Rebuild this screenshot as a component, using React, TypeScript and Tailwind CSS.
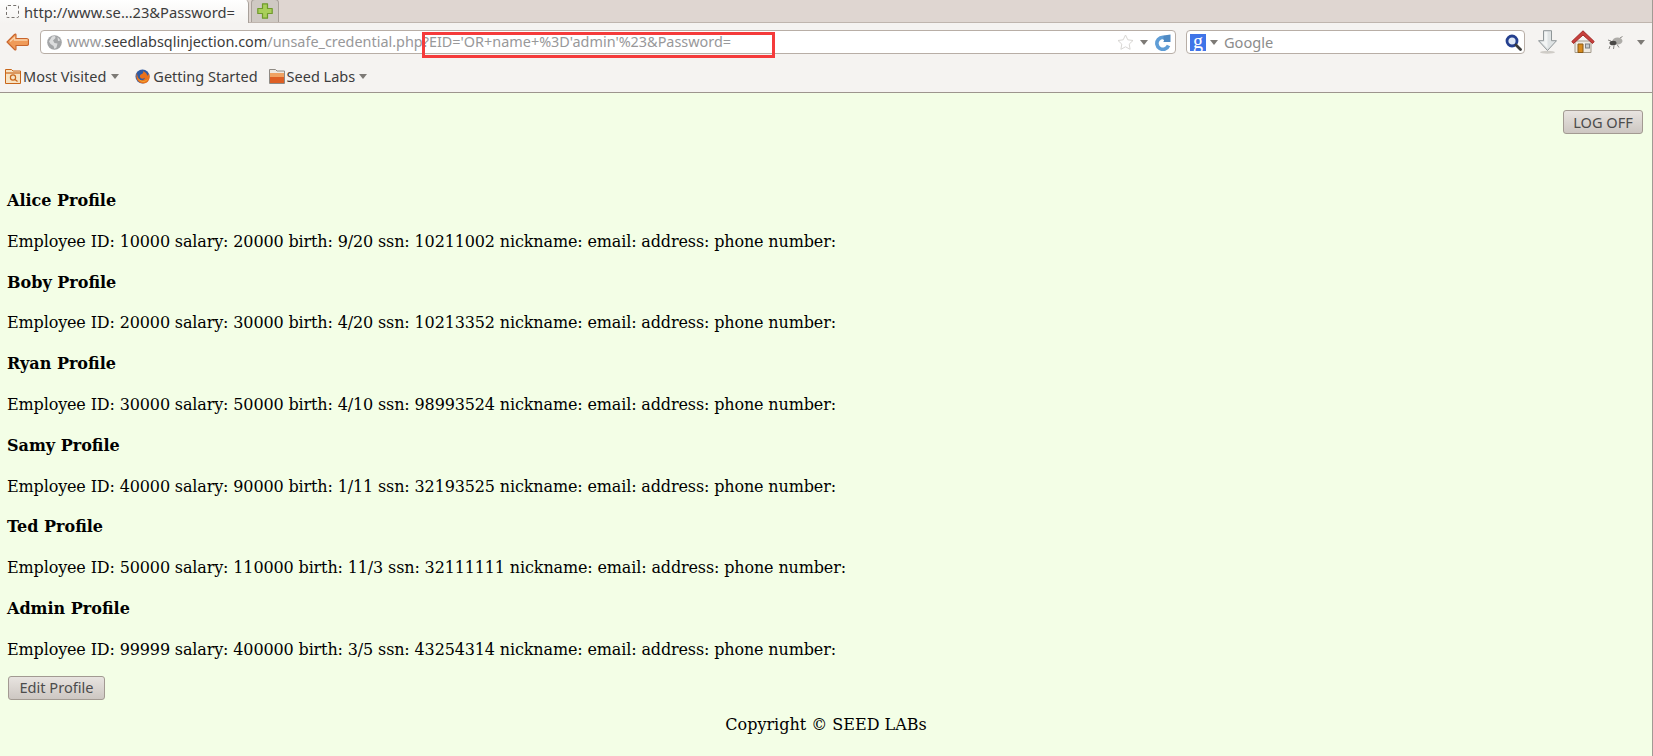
const profiles = [
  { name: 'Alice', id: 10000, salary: 20000, birth: '9/20', ssn: 10211002 },
  { name: 'Boby', id: 20000, salary: 30000, birth: '4/20', ssn: 10213352 },
  { name: 'Ryan', id: 30000, salary: 50000, birth: '4/10', ssn: 98993524 },
  { name: 'Samy', id: 40000, salary: 90000, birth: '1/11', ssn: 32193525 },
  { name: 'Ted', id: 50000, salary: 110000, birth: '11/3', ssn: 32111111 },
  { name: 'Admin', id: 99999, salary: 400000, birth: '3/5', ssn: 43254314 },
]

function Caret({ className = '' }: { className?: string }) {
  return (
    <svg width="8" height="5" viewBox="0 0 8 5" className={`shrink-0 ${className}`}>
      <path d="M0 0h8L4 5z" fill="#7d7a76" />
    </svg>
  )
}

function BackArrow() {
  return (
    <svg width="23" height="20" viewBox="0 0 23 20" className="shrink-0">
      <path d="M1 10 8.500 2.500c1-1 1.500-.5 1.500.5v3.500h10.500c1.500 0 2 1 2 1.500v4c0 .8-.5 1.500-2 1.500H10V17c0 1-.5 1.500-1.500.5z" fill="#ef9a58" stroke="#c8642c" strokeWidth="1.100" strokeLinejoin="round" />
      <path d="M4 9.500 8.500 5.500v2.500h13" fill="none" stroke="#fbd3ab" strokeWidth="1.300" />
    </svg>
  )
}

function Globe() {
  return (
    <svg width="15" height="15" viewBox="0 0 15 15" className="shrink-0">
      <circle cx="7.500" cy="7.500" r="7.300" fill="#a3a5a7" />
      <path d="M5 1.500 8 1l.5 2L6 5.500l1.500 2.500 3 .5-1 4-2 1.500-1-3-3-2-1.500-2.500zM10.500 2l3 3.500-2.500.5z" fill="#dcddde" />
    </svg>
  )
}

function Folder({ tag = false }: { tag?: boolean }) {
  return (
    <svg width="16" height="16" viewBox="0 0 16 16" className="shrink-0">
      <path d="M.5 3V1.500h6L8 3h7.500v12.500H.5z" fill={tag ? '#f7e3c4' : '#eee9e2'} stroke={tag ? '#c9661a' : '#8f8a84'} />
      {tag ? (
        <g fill="none" stroke="#c9661a" strokeWidth="1.200">
          <path d="M1 5h14" />
          <circle cx="8" cy="9.500" r="2.600" />
          <path d="m10 11.500 2.500 2" />
        </g>
      ) : (
        <>
          <rect x="1" y="5" width="14" height="10" fill="#de5f24" />
          <rect x="1" y="5" width="14" height="4" fill="#f0a262" />
        </>
      )}
    </svg>
  )
}

function Firefox() {
  return (
    <svg width="15" height="15" viewBox="0 0 15 15" className="shrink-0">
      <circle cx="7.500" cy="7.500" r="7" fill="#2f5aa3" />
      <path d="M2 3.500C1 6 1 10 3.500 12.500S11 15 13 12.500s2.200-6 .5-8.500c.2 1.500-.3 2.300-1 2.800C12 5 10.500 3 8 2c.5 1.500 0 2.500-1 3-1.500.5-2.500 1.500-2 3 .4 1.300 2 2 3.500 1.500 1-.3 1.500-.8 1.500-.8-.3 2-2.500 3-4.500 2.300C3.500 10.200 2 7 2 3.500z" fill="#e8711c" />
      <path d="M3 9c1 3 4 4.500 7 3.500 1.500-.5 2.500-1.700 3-3-1 1.500-3 3-5.500 2.500C5.500 11.600 4 10.500 3 9z" fill="#f6b63a" />
    </svg>
  )
}

function PlusTab() {
  return (
    <svg width="16" height="16" viewBox="0 0 16 16">
      <path d="M5.500.8h5v4.700h4.700v5h-4.700v4.700h-5v-4.700H.8v-5h4.700z" fill="#a9cf5a" stroke="#6f9a2c" strokeWidth="1.200" strokeLinejoin="round" />
    </svg>
  )
}

function Star() {
  return (
    <svg width="17" height="16" viewBox="0 0 17 16" className="shrink-0">
      <path d="m8.500 1 2.300 4.800 5.200.7-3.800 3.600.9 5.200-4.600-2.500-4.600 2.500.9-5.200L1 6.500l5.200-.7z" fill="#fff" stroke="#d8d6d3" />
    </svg>
  )
}

function Reload() {
  return (
    <svg width="16" height="17" viewBox="0 0 16 17" className="shrink-0">
      <path d="M12.500 5.500A6 6 0 1 0 13.500 11.500" fill="none" stroke="#5f9dd6" strokeWidth="3.600" />
      <path d="M8.500 1.500 15.500.5v7.500H8.500z" fill="#4f8ac4" />
      <path d="M7 8.500a2 2 0 0 1 2-2" fill="none" stroke="#fff" strokeWidth="1.200" />
    </svg>
  )
}

function Magnifier() {
  return (
    <svg width="17" height="17" viewBox="0 0 17 17" className="shrink-0">
      <circle cx="7" cy="7" r="5" fill="#dfe8f6" stroke="#25408f" strokeWidth="2.800" />
      <path d="m11 11 4.500 4.500" stroke="#3a3a3a" strokeWidth="2.800" strokeLinecap="round" />
    </svg>
  )
}

function DownArrow() {
  return (
    <svg width="19" height="24" viewBox="0 0 19 24" className="shrink-0">
      <ellipse cx="9.500" cy="22.300" rx="7.500" ry="1.500" fill="#cfccc7" />
      <path d="M5.500.7h8v10h5L9.500 20.500.5 10.700h5z" fill="#dfe3e4" stroke="#8f9698" strokeLinejoin="round" />
      <path d="M6.500 1.700h3v16.500l-6.500-6.500h3.500z" fill="#f2f4f4" />
    </svg>
  )
}

function Home() {
  return (
    <svg width="24" height="24" viewBox="0 0 24 24" className="shrink-0">
      <path d="M4 11h16v11.500H4z" fill="#efeae2" stroke="#a49b8d" />
      <path d="M12 .8 .8 11.500l1.700 2L12 5l9.500 8.500 1.700-2z" fill="#c8403c" stroke="#a32a28" strokeLinejoin="round" />
      <path d="M7 14h5v8.500H7z" fill="#d98a1c" stroke="#8a5a14" />
      <rect x="14.500" y="14" width="4" height="4" fill="#c6cbd0" stroke="#7d8083" />
    </svg>
  )
}

function Bug() {
  return (
    <svg width="17" height="14" viewBox="0 0 17 14" className="shrink-0">
      <ellipse cx="10.500" cy="5" rx="5" ry="3.500" fill="#aeaca8" />
      <ellipse cx="6" cy="7" rx="3.500" ry="2.300" fill="#4a4846" />
      <path d="M3 10 2 13M7 9.500l-.5 3.500M10 8.500l2 3M13 2l2.500-1.500M4 5 1 4" stroke="#8a8885" strokeWidth="1" />
    </svg>
  )
}

function GoogleBox() {
  return (
    <span className="flex h-[17px] w-4 shrink-0 items-center justify-center bg-[#3f74e8] pb-[3px] font-['Liberation_Serif',serif] text-[20px] leading-none text-white">
      g
    </span>
  )
}

function PageButton({ label, className = '' }: { label: string; className?: string }) {
  return (
    <button className={`h-[24px] rounded-[3px] border border-[#a29a92] bg-gradient-to-b from-[#e8e4e0] to-[#cdc7c2] text-[14.600px] leading-none text-[#4c4c4c] ${className}`}>
      {label}
    </button>
  )
}

export default function App() {
  return (
    <div className="flex h-[756px] w-[1653px] flex-col overflow-hidden border-r border-[#a09a94] bg-[#f3fee6] font-['Noto_Sans',sans-serif]">
      <div className="relative flex h-[23px] shrink-0 items-end gap-[2px] border-b border-[#bfb5ae] bg-[#dfd6d1]">
        <div className="z-10 -mb-px flex h-[24px] w-[249px] items-center rounded-tr-[5px] border-r border-[#a8a09a] bg-gradient-to-b from-white to-[#f5f3f1] pl-[6px]">
          <div className="h-[13px] w-[13px] shrink-0 rounded-[2px] border border-dashed border-[#77736f]" />
          <span className="ml-[5px] mt-[2px] whitespace-nowrap text-[14.700px] leading-none text-[#3c3c3c]">http://www.se…23&amp;Password=</span>
        </div>
        <div className="flex h-[23px] w-[28px] items-center justify-center rounded-t-[4px] border border-b-0 border-[#a8a09a] bg-[#cfc9c3]">
          <PlusTab />
        </div>
      </div>

      <div className="relative flex h-[37px] shrink-0 items-start bg-[#f5f3f1] pl-[6px] pt-[7px]">
        <div className="mt-[2px]">
          <BackArrow />
        </div>
        <div className="ml-[11px] flex h-[24px] w-[1136px] items-center rounded-[4px] border border-[#b8aea6] bg-white pl-[6px] pr-[4px]">
          <Globe />
          <span className="ml-[5px] mt-[1px] whitespace-nowrap text-[14.420px] leading-none text-[#98989a]">
            www.<span className="text-[#3c3c3c]">seedlabsqlinjection.com</span>/unsafe_credential.php?EID='OR+name+%3D'admin'%23&amp;Password=
          </span>
          <div className="ml-auto flex items-center">
            <Star />
            <Caret className="ml-[6px]" />
            <div className="ml-[7px]">
              <Reload />
            </div>
          </div>
        </div>
        <div className="ml-[10px] flex h-[24px] w-[339px] items-center rounded-[4px] border border-[#b8aea6] bg-white pl-[3px] pr-[2px]">
          <GoogleBox />
          <Caret className="ml-[4px]" />
          <span className="ml-[6px] mt-[1px] text-[14.600px] leading-none text-[#8c8c8c]">Google</span>
          <div className="ml-auto">
            <Magnifier />
          </div>
        </div>
        <div className="ml-[13px]">
          <DownArrow />
        </div>
        <div className="ml-[14px]">
          <Home />
        </div>
        <div className="ml-[12px] mt-[6px]">
          <Bug />
        </div>
        <Caret className="ml-[13px] mt-[10px]" />
        <div className="absolute left-[422px] top-[9px] h-[26px] w-[353px] border-[3px] border-[#f53b3b]" />
      </div>

      <div className="flex h-[33px] shrink-0 items-center border-b border-[#9d958e] bg-[#f5f3f1] pl-[5px] text-[14.500px] leading-none text-[#3c3c3c]">
        <Folder tag />
        <span className="ml-[2px] mt-[1px]">Most Visited</span>
        <Caret className="ml-[5px]" />
        <div className="ml-[16px]">
          <Firefox />
        </div>
        <span className="ml-[3px] mt-[1px]">Getting Started</span>
        <div className="ml-[11px]">
          <Folder />
        </div>
        <span className="ml-[2px] mt-[1px]">Seed Labs</span>
        <Caret className="ml-[4px]" />
      </div>

      <div className="flex flex-1 flex-col font-['DejaVu_Serif',serif] text-[16px] text-black">
        <div className="flex justify-end pr-[9px] pt-[17px]">
          <PageButton label="LOG OFF" className="w-[80px] font-['Noto_Sans',sans-serif]" />
        </div>
        <div className="mt-[55px] flex flex-col gap-4 pl-[7px] leading-[24.800px]">
          {profiles.map(p => (
            <div key={p.name} className="flex flex-col gap-4">
              <p className="font-bold">{p.name} Profile</p>
              <p className="tracking-[-0.140px]">
                Employee ID: {p.id} salary: {p.salary} birth: {p.birth} ssn: {p.ssn} nickname: email: address: phone number:
              </p>
            </div>
          ))}
        </div>
        <div className="mt-[13px] pl-[8px]">
          <PageButton label="Edit Profile" className="w-[97px] font-['Noto_Sans',sans-serif]" />
        </div>
        <p className="mt-[13px] text-center leading-[24px]">Copyright © SEED LABs</p>
      </div>
    </div>
  )
}
